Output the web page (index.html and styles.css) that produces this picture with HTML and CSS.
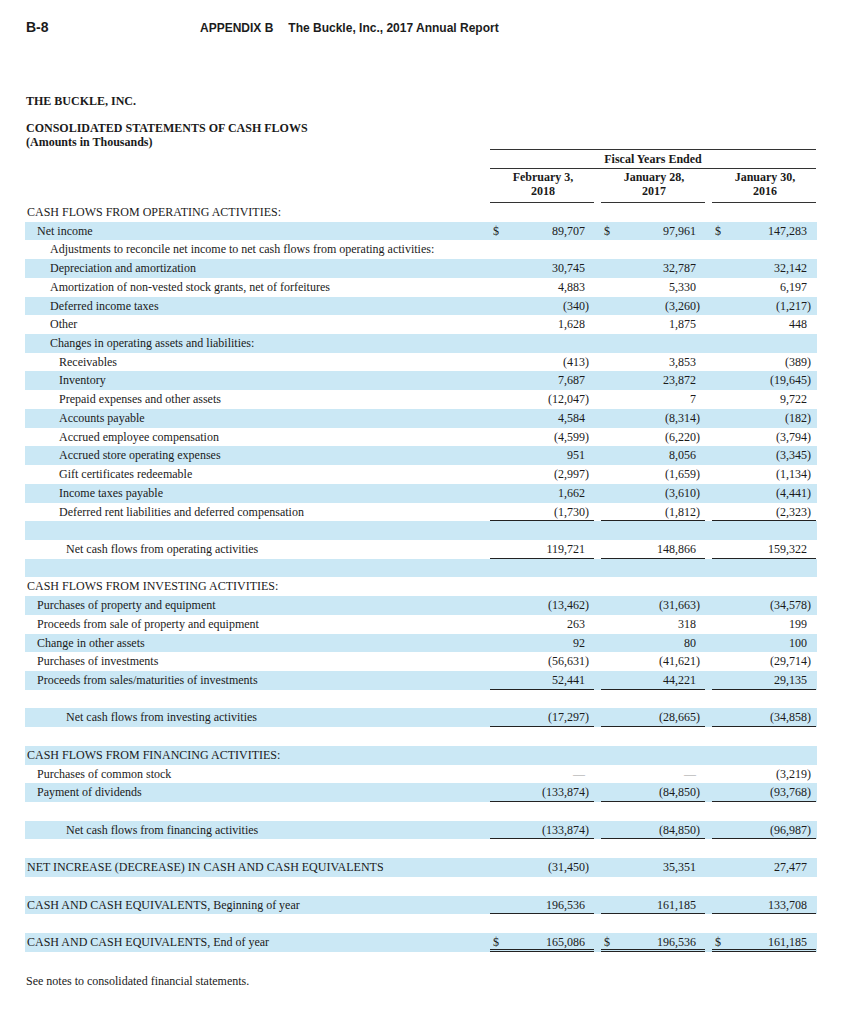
FILE: index.html
```html
<!DOCTYPE html>
<html>
<head>
<meta charset="utf-8">
<link rel="stylesheet" href="styles.css">
</head>
<body>
<div class="page">
  <div class="runhead">
    <span class="folio">B-8</span>
    <span class="appx">APPENDIX B</span>
    <span class="report">The Buckle, Inc., 2017 Annual Report</span>
  </div>

  <div class="company">THE BUCKLE, INC.</div>
  <div class="title">CONSOLIDATED STATEMENTS OF CASH FLOWS</div>
  <div class="subtitle">(Amounts in Thousands)</div>

  <div class="stmt">
    <div class="hrow fy">
      <div></div>
      <div class="fyspan">Fiscal Years Ended</div>
    </div>
    <div class="hrow dates">
      <div></div>
      <div class="dh">February 3,<br>2018</div>
      <div class="dh">January 28,<br>2017</div>
      <div class="dh">January 30,<br>2016</div>
    </div>

    <div class="row"><div class="lbl i0">CASH FLOWS FROM OPERATING ACTIVITIES:</div><div></div><div></div><div></div></div>
    <div class="row sh"><div class="lbl i1">Net income</div><div class="c"><span class="cur">$</span><span class="n">89,707</span></div><div class="c"><span class="cur">$</span><span class="n">97,961</span></div><div class="c"><span class="cur">$</span><span class="n">147,283</span></div></div>
    <div class="row"><div class="lbl i2">Adjustments to reconcile net income to net cash flows from operating activities:</div><div></div><div></div><div></div></div>
    <div class="row sh"><div class="lbl i2">Depreciation and amortization</div><div class="c"><span class="n">30,745</span></div><div class="c"><span class="n">32,787</span></div><div class="c"><span class="n">32,142</span></div></div>
    <div class="row"><div class="lbl i2">Amortization of non-vested stock grants, net of forfeitures</div><div class="c"><span class="n">4,883</span></div><div class="c"><span class="n">5,330</span></div><div class="c"><span class="n">6,197</span></div></div>
    <div class="row sh"><div class="lbl i2">Deferred income taxes</div><div class="c"><span class="n neg">(340)</span></div><div class="c"><span class="n neg">(3,260)</span></div><div class="c"><span class="n neg">(1,217)</span></div></div>
    <div class="row"><div class="lbl i2">Other</div><div class="c"><span class="n">1,628</span></div><div class="c"><span class="n">1,875</span></div><div class="c"><span class="n">448</span></div></div>
    <div class="row sh"><div class="lbl i2">Changes in operating assets and liabilities:</div><div></div><div></div><div></div></div>
    <div class="row"><div class="lbl i3">Receivables</div><div class="c"><span class="n neg">(413)</span></div><div class="c"><span class="n">3,853</span></div><div class="c"><span class="n neg">(389)</span></div></div>
    <div class="row sh"><div class="lbl i3">Inventory</div><div class="c"><span class="n">7,687</span></div><div class="c"><span class="n">23,872</span></div><div class="c"><span class="n neg">(19,645)</span></div></div>
    <div class="row"><div class="lbl i3">Prepaid expenses and other assets</div><div class="c"><span class="n neg">(12,047)</span></div><div class="c"><span class="n">7</span></div><div class="c"><span class="n">9,722</span></div></div>
    <div class="row sh"><div class="lbl i3">Accounts payable</div><div class="c"><span class="n">4,584</span></div><div class="c"><span class="n neg">(8,314)</span></div><div class="c"><span class="n neg">(182)</span></div></div>
    <div class="row"><div class="lbl i3">Accrued employee compensation</div><div class="c"><span class="n neg">(4,599)</span></div><div class="c"><span class="n neg">(6,220)</span></div><div class="c"><span class="n neg">(3,794)</span></div></div>
    <div class="row sh"><div class="lbl i3">Accrued store operating expenses</div><div class="c"><span class="n">951</span></div><div class="c"><span class="n">8,056</span></div><div class="c"><span class="n neg">(3,345)</span></div></div>
    <div class="row"><div class="lbl i3">Gift certificates redeemable</div><div class="c"><span class="n neg">(2,997)</span></div><div class="c"><span class="n neg">(1,659)</span></div><div class="c"><span class="n neg">(1,134)</span></div></div>
    <div class="row sh"><div class="lbl i3">Income taxes payable</div><div class="c"><span class="n">1,662</span></div><div class="c"><span class="n neg">(3,610)</span></div><div class="c"><span class="n neg">(4,441)</span></div></div>
    <div class="row"><div class="lbl i3">Deferred rent liabilities and deferred compensation</div><div class="c rule"><span class="n neg">(1,730)</span></div><div class="c rule"><span class="n neg">(1,812)</span></div><div class="c rule"><span class="n neg">(2,323)</span></div></div>
    <div class="row sh"><div class="lbl"></div><div></div><div></div><div></div></div>
    <div class="row"><div class="lbl i4">Net cash flows from operating activities</div><div class="c rule"><span class="n">119,721</span></div><div class="c rule"><span class="n">148,866</span></div><div class="c rule"><span class="n">159,322</span></div></div>
    <div class="row sh"><div class="lbl"></div><div></div><div></div><div></div></div>
    <div class="row"><div class="lbl i0">CASH FLOWS FROM INVESTING ACTIVITIES:</div><div></div><div></div><div></div></div>
    <div class="row sh"><div class="lbl i1">Purchases of property and equipment</div><div class="c"><span class="n neg">(13,462)</span></div><div class="c"><span class="n neg">(31,663)</span></div><div class="c"><span class="n neg">(34,578)</span></div></div>
    <div class="row"><div class="lbl i1">Proceeds from sale of property and equipment</div><div class="c"><span class="n">263</span></div><div class="c"><span class="n">318</span></div><div class="c"><span class="n">199</span></div></div>
    <div class="row sh"><div class="lbl i1">Change in other assets</div><div class="c"><span class="n">92</span></div><div class="c"><span class="n">80</span></div><div class="c"><span class="n">100</span></div></div>
    <div class="row"><div class="lbl i1">Purchases of investments</div><div class="c"><span class="n neg">(56,631)</span></div><div class="c"><span class="n neg">(41,621)</span></div><div class="c"><span class="n neg">(29,714)</span></div></div>
    <div class="row sh"><div class="lbl i1">Proceeds from sales/maturities of investments</div><div class="c rule"><span class="n">52,441</span></div><div class="c rule"><span class="n">44,221</span></div><div class="c rule"><span class="n">29,135</span></div></div>
    <div class="row"><div class="lbl"></div><div></div><div></div><div></div></div>
    <div class="row sh"><div class="lbl i4">Net cash flows from investing activities</div><div class="c rule"><span class="n neg">(17,297)</span></div><div class="c rule"><span class="n neg">(28,665)</span></div><div class="c rule"><span class="n neg">(34,858)</span></div></div>
    <div class="row"><div class="lbl"></div><div></div><div></div><div></div></div>
    <div class="row sh"><div class="lbl i0">CASH FLOWS FROM FINANCING ACTIVITIES:</div><div></div><div></div><div></div></div>
    <div class="row"><div class="lbl i1">Purchases of common stock</div><div class="c"><span class="n dash">—</span></div><div class="c"><span class="n dash">—</span></div><div class="c"><span class="n neg">(3,219)</span></div></div>
    <div class="row sh"><div class="lbl i1">Payment of dividends</div><div class="c rule"><span class="n neg">(133,874)</span></div><div class="c rule"><span class="n neg">(84,850)</span></div><div class="c rule"><span class="n neg">(93,768)</span></div></div>
    <div class="row"><div class="lbl"></div><div></div><div></div><div></div></div>
    <div class="row sh"><div class="lbl i4">Net cash flows from financing activities</div><div class="c rule"><span class="n neg">(133,874)</span></div><div class="c rule"><span class="n neg">(84,850)</span></div><div class="c rule"><span class="n neg">(96,987)</span></div></div>
    <div class="row"><div class="lbl"></div><div></div><div></div><div></div></div>
    <div class="row sh"><div class="lbl i0">NET INCREASE (DECREASE) IN CASH AND CASH EQUIVALENTS</div><div class="c"><span class="n neg">(31,450)</span></div><div class="c"><span class="n">35,351</span></div><div class="c"><span class="n">27,477</span></div></div>
    <div class="row"><div class="lbl"></div><div></div><div></div><div></div></div>
    <div class="row sh"><div class="lbl i0">CASH AND CASH EQUIVALENTS, Beginning of year</div><div class="c rule"><span class="n">196,536</span></div><div class="c rule"><span class="n">161,185</span></div><div class="c rule"><span class="n">133,708</span></div></div>
    <div class="row"><div class="lbl"></div><div></div><div></div><div></div></div>
    <div class="row sh"><div class="lbl i0">CASH AND CASH EQUIVALENTS, End of year</div><div class="c drule"><span class="cur">$</span><span class="n">165,086</span></div><div class="c drule"><span class="cur">$</span><span class="n">196,536</span></div><div class="c drule"><span class="cur">$</span><span class="n">161,185</span></div></div>
  </div>

  <div class="note">See notes to consolidated financial statements.</div>
</div>
</body>
</html>
```

FILE: styles.css
```css
html, body {
  margin: 0;
  padding: 0;
  background: #ffffff;
}

.page {
  padding-left: 25px;
  width: 792px;
  color: #1a1a1a;
  font-family: "Liberation Serif", "Times New Roman", serif;
  font-size: 12px;
}

.runhead {
  display: flex;
  align-items: baseline;
  padding-top: 19px;
  height: 18px;
  font-family: "Liberation Sans", Arial, sans-serif;
  font-weight: bold;
  font-size: 12px;
  color: #1c1c1c;
}

.folio {
  width: 174px;
  padding-left: 1px;
  font-size: 14px;
}

.appx {
  margin-right: 15px;
}

.company {
  margin-top: 57px;
  padding-left: 1px;
  font-weight: bold;
  line-height: 14px;
}

.title {
  margin-top: 13px;
  padding-left: 1px;
  font-weight: bold;
  line-height: 14px;
}

.subtitle {
  padding-left: 1px;
  font-weight: bold;
  line-height: 14px;
}

.hrow {
  display: grid;
  grid-template-columns: 458px 104px 104px 104px;
  column-gap: 7px;
  font-weight: bold;
}

.fy {
  grid-template-columns: 458px 326px;
}

.fyspan {
  border-top: 1px solid #333;
  border-bottom: 1px solid #333;
  height: 20px;
  box-sizing: border-box;
  text-align: center;
  line-height: 18px;
}

.dates .dh {
  height: 34px;
  box-sizing: border-box;
  border-bottom: 1px solid #333;
  text-align: center;
  line-height: 14px;
  padding-top: 1px;
  padding-left: 2px;
}

.row {
  display: grid;
  grid-template-columns: 458px 104px 104px 104px;
  column-gap: 7px;
  height: 18.72px;
  line-height: 19px;
  white-space: nowrap;
}

.row.sh {
  background: #cbe8f5;
}

.i0 { padding-left: 2px; }
.i1 { padding-left: 12px; }
.i2 { padding-left: 25px; }
.i3 { padding-left: 34px; }
.i4 { padding-left: 41px; }

.c {
  display: flex;
  justify-content: space-between;
  box-sizing: border-box;
  height: 18.72px;
}

.cur {
  padding-left: 3px;
}

.n {
  margin-left: auto;
  padding-right: 9px;
}

.n.neg {
  padding-right: 5px;
}

.n.dash {
  color: #9a9a9a;
  padding-right: 9px;
}

.rule {
  border-bottom: 1px solid #222;
}

.drule {
  border-bottom: 3px double #222;
}

.note {
  margin-top: 21px;
  padding-left: 1px;
  line-height: 16px;
}
```
